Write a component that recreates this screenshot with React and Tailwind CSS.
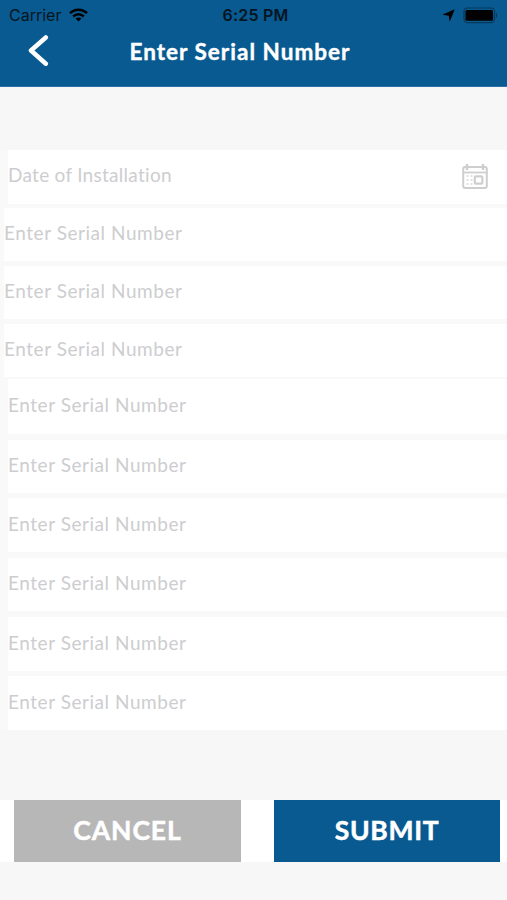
const rows = [
  { label: 'Date of Installation', box: 'ml-2 h-[54px] mb-1 pb-[4px] tracking-[0.28px]', date: true },
  { label: 'Enter Serial Number', box: 'ml-1 h-[53px] mb-[5px] pb-[3px] tracking-[0.55px]' },
  { label: 'Enter Serial Number', box: 'ml-1 h-[53px] mb-[5px] pb-[3px] tracking-[0.55px]' },
  { label: 'Enter Serial Number', box: 'ml-1 h-[53px] mb-[2px] pb-[3px] tracking-[0.55px]' },
  { label: 'Enter Serial Number', box: 'ml-2 h-[55px] mb-[6px] pb-[3px] tracking-[0.55px]' },
  { label: 'Enter Serial Number', box: 'ml-2 h-[53px] mb-[5px] pb-[3px] tracking-[0.55px]' },
  { label: 'Enter Serial Number', box: 'ml-2 h-[54px] mb-[6px] pb-[2px] tracking-[0.55px]' },
  { label: 'Enter Serial Number', box: 'ml-2 h-[53px] mb-[6px] pb-[3px] tracking-[0.55px]' },
  { label: 'Enter Serial Number', box: 'ml-2 h-[54px] mb-[5px] pb-[2px] tracking-[0.55px]' },
  { label: 'Enter Serial Number', box: 'ml-2 h-[54px] pb-[2px] tracking-[0.55px]' },
];

function CalendarIcon() {
  return (
    <svg width="26" height="26" viewBox="0 0 26 26" fill="none" stroke="#cecece" className="mt-[3px]">
      <rect x="1.2" y="3" width="23.6" height="21" rx="2" strokeWidth="2" />
      <path d="M1 8.5H25" strokeWidth="1.8" />
      <path d="M5 0V6M21 0V6" strokeWidth="2.4" />
      <rect x="12.8" y="12.3" width="7.6" height="7.4" rx="1.2" strokeWidth="2.2" />
      <path d="M4.5 12H6.5M8.5 12H10.5M4.5 16H6.5M8.5 16H10.5M4.5 20H6.5M8.5 20H10.5" strokeWidth="1.5" strokeOpacity="0.8" />
    </svg>
  );
}

function StatusBar() {
  return (
    <div className="grid h-[30px] grid-cols-3 items-center px-[9px] font-['Inter',sans-serif] text-[16px] text-[#061521]">
      <div className="flex items-center gap-[8px]">
        <span className="tracking-[0px]">Carrier</span>
        <svg width="19" height="14" viewBox="0 0 19 14" fill="none" stroke="#000" strokeWidth="2.5">
          <path d="M1 5.2C5.8 0.5 13.2 0.5 18 5.2" />
          <path d="M4.2 8.5C7.2 5.6 11.8 5.6 14.8 8.5" />
          <path d="M9.5 13.6L6.5 10.6C8.2 9 10.8 9 12.5 10.6Z" fill="#000" stroke="none" />
        </svg>
      </div>
      <span className="whitespace-nowrap pl-[4px] text-center font-semibold tracking-[0.2px]">6:25 PM</span>
      <div className="flex items-center justify-end gap-[8px]">
        <svg width="13" height="13" viewBox="0 0 13 13" fill="#000">
          <path d="M12.7 0.3L7.7 12.7L6.8 6.7L0.3 5.8Z" />
        </svg>
        <svg width="36" height="17" viewBox="0 0 36 17" className="mr-[-1px]">
          <rect x="1" y="1" width="30.5" height="14.6" rx="3.5" fill="none" stroke="#07395c" strokeWidth="1.2" />
          <rect x="2.5" y="3" width="27.5" height="10.8" rx="1.5" fill="#000" />
          <path d="M33 5.5Q35.5 8.3 33 11Z" fill="#07395c" />
        </svg>
      </div>
    </div>
  );
}

export default function App() {
  return (
    <div className="flex h-[900px] w-[507px] flex-col overflow-hidden bg-[#f7f7f7] font-['Lato',sans-serif]">
      <header className="h-[87px] shrink-0 border-b border-[#2a6fa8] bg-[#085a91]">
        <StatusBar />
        <div className="grid h-[42px] grid-cols-[64px_1fr_64px] items-center">
          <button aria-label="Back" className="pl-[28px]">
            <svg width="21" height="32" viewBox="0 0 21 32" fill="none" stroke="#fff" strokeWidth="4.5" strokeLinecap="round" strokeLinejoin="round">
              <path d="M17.8 2.5L3 15.5L17.8 28.7" />
            </svg>
          </button>
          <h1 className="ml-[-27px] mt-[2px] whitespace-nowrap text-center text-[22.5px] font-bold tracking-[1.02px] text-white [-webkit-text-stroke:0.4px_white]">Enter Serial Number</h1>
        </div>
      </header>
      <main className="mt-[63px] flex flex-col bg-[#f9f9f9]">
        {rows.map((row, i) => (
          <div key={i} className={`flex shrink-0 items-center justify-between bg-white pr-[19px] text-[19px] text-[#cdcdd0] ${row.box}`}>
            <span>{row.label}</span>
            {row.date && <CalendarIcon />}
          </div>
        ))}
      </main>
      <footer className="mt-[70px] flex h-[62px] shrink-0 justify-between bg-white pl-[14px] pr-[7px]">
        <button className="w-[227px] bg-[#b7b7b7] pb-px text-[26.5px] font-bold tracking-[0.9px] text-white [-webkit-text-stroke:0.5px_white]">CANCEL</button>
        <button className="w-[226px] bg-[#085a91] pb-px text-[26.5px] font-bold tracking-[0.7px] text-white [-webkit-text-stroke:0.5px_white]">SUBMIT</button>
      </footer>
    </div>
  );
}
